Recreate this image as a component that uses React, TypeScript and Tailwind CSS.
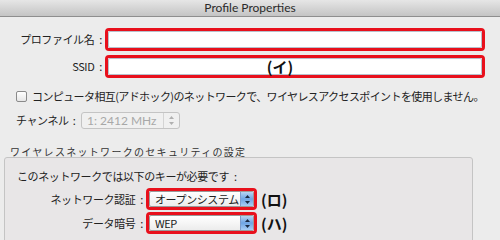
import React from "react";

const jp = { fontFamily: '"Noto Sans CJK JP", "Noto Sans", sans-serif' };
const t = "text-[11px] tracking-[-0.4px] text-[#222] leading-none whitespace-nowrap";

function Arrows({ color = "#333" }: { color?: string }) {
  return (
    <svg width="7" height="11" viewBox="0 0 7 11">
      <path d="M3.5 1 L6 4 L1 4 Z" fill={color} />
      <path d="M3.5 10 L6 7 L1 7 Z" fill={color} />
    </svg>
  );
}

function Label({ text, w }: { text: string; w: string }) {
  return (
    <span className={w + " flex justify-end items-center shrink-0 " + t}>
      <span>{text}</span>
      <span className="ml-[5px] mr-[3px]">:</span>
    </span>
  );
}

function BlueSelect({ text }: { text: string }) {
  return (
    <div className="w-[111px] h-[22px] rounded-[4px] border-[3px] border-[#e8101c] flex">
      <div className="flex-1 flex items-center bg-gradient-to-b from-[#ffffff] to-[#ececec] border border-[#9a9a9a] rounded-[2px] overflow-hidden">
        <span className={"flex-1 pl-[5px] " + t + " text-[#111]"}>{text}</span>
        <div className="w-[13px] h-full flex items-center justify-center bg-gradient-to-b from-[#b8d4f2] via-[#6ea4e4] to-[#a8cdf5] border-l border-[#7d9ccc]">
          <Arrows color="#1a2a44" />
        </div>
      </div>
    </div>
  );
}

export default function App() {
  return (
    <div className="w-[500px] h-[240px] overflow-hidden bg-[#ececec] flex flex-col" style={jp}>
      <div className="h-[17px] shrink-0 bg-gradient-to-b from-[#e6e6e6] to-[#c4c4c4] border-b border-[#8e8e8e] flex items-center justify-center">
        <span className="text-[12px] text-[#2a2a2a] leading-none" style={{ fontFamily: '"Lato", "Liberation Sans", sans-serif' }}>Profile Properties</span>
      </div>

      <div className="flex flex-col pt-[11px]">
        <div className="flex items-center h-[23px]">
          <Label w="w-[105px]" text="プロファイル名" />
          <div className="w-[380px] h-[23px] rounded-[4px] border-[3px] border-[#e8101c] bg-white">
            <div className="h-full border border-[#b8c0cc] rounded-[2px]" />
          </div>
        </div>
        <div className="flex items-center h-[23px] mt-[4px]">
          <Label w="w-[105px]" text="SSID" />
          <div className="w-[380px] h-[23px] rounded-[4px] border-[3px] border-[#e8101c] bg-white">
            <div className="h-full border border-[#b8c0cc] rounded-[2px] flex items-center justify-center pr-[30px]">
              <span className="text-[15px] font-bold text-[#111] leading-none">(イ)</span>
            </div>
          </div>
        </div>

        <div className="flex items-center mt-[11px] pl-[16px] h-[14px]">
          <div className="w-[11px] h-[11px] rounded-[2px] border border-[#8a8a8a] bg-gradient-to-b from-white to-[#e6e6e6]" />
          <span className={"ml-[5px] text-[11px] tracking-[-0.6px] text-[#222] leading-none whitespace-nowrap"}>コンピュータ相互(アドホック)のネットワークで、ワイヤレスアクセスポイントを使用しません。</span>
        </div>

        <div className="flex items-center mt-[9px] pl-[16px] h-[17px]">
          <span className={"w-[65px] flex " + t}>
            <span>チャンネル</span>
            <span className="ml-[4px]">:</span>
          </span>
          <div className="w-[99px] h-[17px] rounded-[3px] border border-[#c4c4c4] bg-[#f0f0f0] flex items-center">
            <span className="flex-1 pl-[5px] text-[12px] text-[#a8a8a8] leading-none" style={{ fontFamily: '"Lato", "Liberation Sans", sans-serif' }}>1: 2412 MHz</span>
            <div className="w-[16px] h-full flex items-center justify-center border-l border-[#d4d4d4]">
              <Arrows color="#b0b0b0" />
            </div>
          </div>
        </div>

        <span className="mt-[18px] pl-[10px] text-[10px] tracking-[1.3px] text-[#333] leading-none whitespace-nowrap">ワイヤレスネットワークのセキュリティの設定</span>

        <div className="mt-0 ml-[4px] w-[469px] h-[90px] rounded-t-[3px] border border-[#c4c4c4] bg-[#e8e6e7] flex flex-col">
          <span className={"mt-[13px] pl-[12px] flex " + t}>
            <span>このネットワークでは以下のキーが必要です</span>
            <span className="ml-[5px]">:</span>
          </span>
          <div className="flex items-center mt-[6px]">
            <Label w="w-[141px]" text="ネットワーク認証" />
            <BlueSelect text="オープンシステム" />
            <span className="ml-[4px] text-[15px] font-bold text-[#111] leading-none whitespace-nowrap">(ロ)</span>
          </div>
          <div className="flex items-center mt-[2px]">
            <Label w="w-[141px]" text="データ暗号" />
            <BlueSelect text="WEP" />
            <span className="ml-[4px] text-[15px] font-bold text-[#111] leading-none whitespace-nowrap">(ハ)</span>
          </div>
        </div>
      </div>
    </div>
  );
}
